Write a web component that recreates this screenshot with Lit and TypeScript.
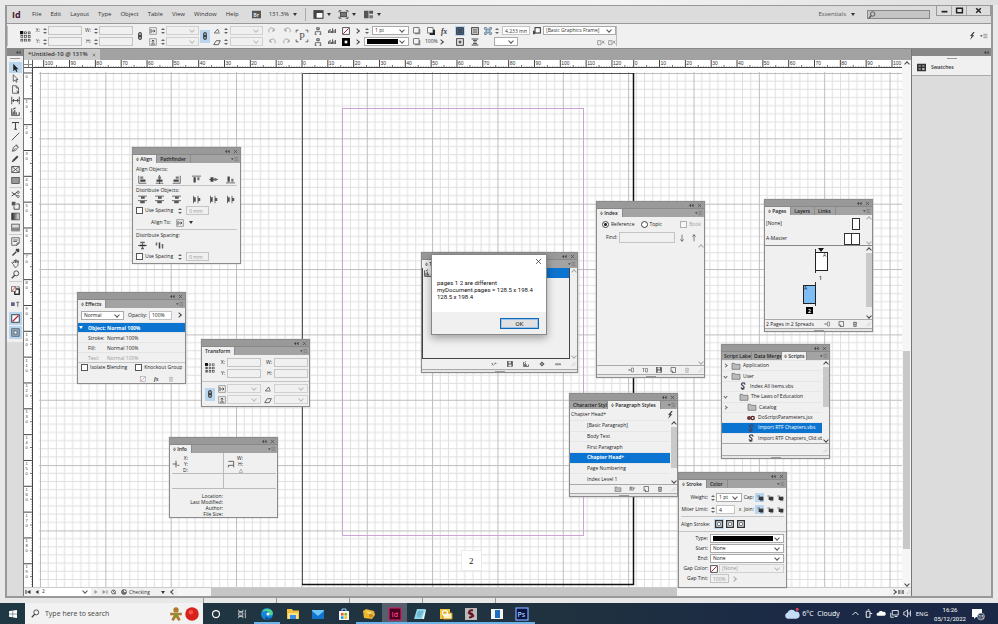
import { LitElement, html, svg, css, nothing } from "lit";
import { customElement } from "lit/decorators.js";
import { classMap } from "lit/directives/class-map.js";

/* Icon artwork, each drawn in a 12 x 12 box. */
const K = "#444";
const line = (d: string, w = 1, c = K) => svg`<path d=${d} fill="none" stroke=${c} stroke-width=${w} />`;
const fill = (d: string, c = K) => svg`<path d=${d} fill=${c} />`;

const art: Record<string, unknown> = {
  select: fill("M3 1v10l2.4-2.2L7 12l1.6-.8L7.200 8.200H10z", "#222"),
  direct: line("M3 1v9l2.300-2L7 11l1.200-.6-1.500-3H9.500z"),
  page: svg`${line("M2 1h5l3 3v7H2zM7 1v3h3")}${fill("M7 7l4 3-2 1z")}`,
  gap: line("M1 1v10M11 1v10M2 6h8M4 4L2 6l2 2M8 4l2 2-2 2", 1.2),
  collect: line("M1 2v9h10V7M3 10V6M5 10V4M7 10V7M3 3l3-2", 1.4),
  type: line("M2 3V2h8v1M6 2v9M4 11h4", 1.4),
  linetool: line("M1 11L11 1", 1.2),
  pen: svg`${line("M2 11l1-5 4-3 2 3-3 4zM2 11l4-4M7 2l3 4")}`,
  pencil: svg`${line("M3 9l6-6", 2.600)}${fill("M1 11l1-3 2 2z")}`,
  frame: line("M1 2h10v8H1zM1 2l10 8M11 2L1 10", 1.100),
  rect: svg`<rect x="1" y="2" width="10" height="8" fill="#999" stroke=${K} />`,
  scissors: svg`${line("M1 3l7 5M1 8l7-5", 1.300)}<circle cx="9.500" cy="3" r="1.500" fill="none" stroke=${K}/><circle cx="9.500" cy="8.500" r="1.500" fill="none" stroke=${K}/>`,
  transform: svg`<rect x="1" y="1" width="5" height="5" fill="#555"/>${line("M7 4h4v7H4V7", 1.200)}`,
  gradient: svg`<defs><linearGradient id="gr"><stop stop-color="#222"/><stop offset="1" stop-color="#eee"/></linearGradient></defs><rect x="1" y="1.500" width="10" height="9" fill="url(#gr)" stroke=${K}/>`,
  feather: svg`<rect x="1" y="1.500" width="10" height="9" fill="#ddd" stroke=${K}/>${fill("M1 6h10v4H1z", "#888")}`,
  note: line("M1 1h10v7l-3 3H1zM3 4h6M3 6h5M8 11V8h3"),
  dropper: svg`${line("M2 10l5-5", 1.800)}${fill("M6 3l1-2 4 0 0 4-2 1z")}`,
  hand: line("M3 7L1 5l1-1 2 1V2h1l1 3 0-4h1l1 4 1-3 1 .5L9 9l-2 2H5z"),
  zoom: svg`<circle cx="7" cy="4.500" r="3.300" fill="none" stroke=${K} stroke-width="1.200"/>${line("M5 7l-4 4", 1.600)}`,
  fillstroke: svg`<rect x="5" y="4" width="6" height="7" fill="#fff" stroke="#222" stroke-width="1.800"/><rect x=".5" y="1" width="6" height="6" fill="#fff" stroke="#555"/>${line("M1 7l5-6", 1, "#c22")}${line("M8 1h3v2", 0.800)}`,
  formats: svg`<rect x="0" y="3" width="5" height="5" fill="#668"/>${line("M7 3h4M9 3v6")}`,
  none: svg`<rect x="1" y="1" width="10" height="10" fill="#fff" stroke="#333" stroke-width="1.200"/>${line("M2 10l8-8", 1.500, "#b3173a")}`,
  preview: svg`<rect x="1" y="1" width="10" height="10" fill="#9ab" stroke="#456"/><rect x="4" y="4" width="4" height="4" fill="#fff" stroke="#456"/>`,
  blackbox: svg`<rect width="12" height="12" fill="#000"/><rect x="4" y="4" width="4" height="4" fill="#fff"/>`,
  ref: svg`${[1, 5, 9].map(y => [1, 5, 9].map(x => svg`<rect x=${x} y=${y} width="2" height="2" fill="#fff" stroke=${K} stroke-width=".8"/>`))}<rect x="0" y="0" width="3.500" height="3.500" fill="#111"/>`,
  chain: svg`<rect x="4" y="1" width="4" height="6" rx="2" fill="none" stroke=${K} stroke-width="1.800"/><rect x="4" y="5" width="4" height="6" rx="2" fill="none" stroke=${K} stroke-width="1.800"/>`,
  scaleX: svg`${line("M1 1h10v10H1z", 0.700)}${line("M3 3v6M4 6h5M7 4l2 2-2 2", 1.300)}`,
  scaleY: svg`${line("M1 1h10v10H1z", 0.700)}${line("M3 9h6M6 8V3M4 5l2-2 2 2", 1.300)}`,
  angle: line("M2 9h8M2 9l5-6 2 5", 1.100),
  shear: line("M1 10h7l3-6H5z", 1.200),
  rotR: line("M2 8a4 4 0 1 1 7-2M9 2v4H6", 1, "#888"),
  rotL: line("M10 8a4 4 0 1 0-7-2M3 2v4h3", 1, "#888"),
  flipP: svg`${line("M1 3V1h2M9 1h2v2M1 9v2h2M9 11h2V9", 0.700)}<text x="3.500" y="9.500" font-size="9" font-family="Liberation Serif, serif" fill="#555">P</text>`,
  tree: line("M6 1v4M4 1h4v3H4zM2 11V7h8v4M1 11h3M8 11h3", 1.100),
  bars: line("M1 9V5M3 9V3M5 9V6M7 9V2M9 9V5M11 9V3", 1.500),
  alignL: svg`${line("M1 1v10h10")}<rect x="3" y="2" width="4" height="3" fill="#777"/><rect x="3" y="6" width="7" height="3" fill="#444"/>`,
  alignC: svg`${line("M6 0v12M1 11h10")}<rect x="4" y="2" width="4" height="3" fill="#777"/><rect x="2" y="6" width="8" height="3" fill="#444"/>`,
  alignR: svg`${line("M11 1v10H1")}<rect x="5" y="2" width="4" height="3" fill="#777"/><rect x="2" y="6" width="7" height="3" fill="#444"/>`,
  alignT: svg`${line("M0 1.500h12")}<rect x="2" y="3" width="3" height="7" fill="#444"/><rect x="7" y="3" width="3" height="4" fill="#777"/>`,
  alignM: svg`${line("M0 6h12")}<rect x="2" y="3" width="4" height="6" fill="#444"/><rect x="7" y="4" width="3" height="4" fill="#777"/>`,
  alignB: svg`${line("M0 10.500h12")}<rect x="2" y="2" width="3" height="7" fill="#444"/><rect x="7" y="5" width="3" height="4" fill="#777"/>`,
  distH: svg`${line("M0 1.500h12M0 7.500h12")}<rect x="4" y="2" width="5" height="3" fill="#555"/><rect x="3" y="8" width="6" height="3" fill="#555"/>`,
  distV: svg`${line("M2 1v10M8 1v10")}<rect x="2" y="3" width="3" height="6" fill="#555"/><rect x="8" y="4" width="3" height="4" fill="#555"/>`,
  spaceV: svg`${line("M0 6h12M6 1v10")}<rect x="3" y="1" width="6" height="2" fill="#666"/><rect x="2" y="5" width="8" height="2" fill="#333"/><rect x="4" y="9" width="4" height="2" fill="#666"/>`,
  spaceH: svg`<rect x="1" y="2" width="2" height="4" fill="#666"/><rect x="5" y="2" width="2" height="8" fill="#444"/><rect x="9" y="4" width="2" height="6" fill="#666"/>`,
  drop: svg`<rect x="3" y="3" width="8" height="8" fill="#999"/><rect x="1" y="1" width="8" height="8" fill="#f4f4f4" stroke=${K}/>`,
  drop2: svg`<rect x="4" y="4" width="8" height="8" fill="#222"/><rect x="1" y="1" width="8" height="8" fill="#f4f4f4" stroke=${K}/>`,
  fx: svg`<text x="0" y="10" font-size="11" font-style="italic" font-weight="700" font-family="Liberation Serif, serif" fill="#333">fx</text>`,
  wrap: svg`<rect x="1" y="1" width="10" height="10" fill="#ddd" stroke="#333" stroke-width="1.400"/>${line("M3 4h6M3 6h6M3 8h6")}`,
  wrapDark: svg`<rect x="1" y="1" width="10" height="10" fill="#567" stroke="#234" stroke-width="1.400"/>${line("M3 4h6M3 6h6M3 8h6", 1, "#234")}`,
  wrapBox: svg`<rect x="1" y="1" width="10" height="10" fill="#eee" stroke="#333" stroke-width="1.400"/><rect x="4" y="4" width="4" height="4" fill="#555"/>`,
  jump: line("M1 1.500h10M1 10.500h10M3 4h6M3 8h6M5 6h2", 1.500),
  fit: svg`<rect x="3" y="3" width="6" height="6" fill="#acd" stroke="#357"/>${line("M1 4V1h3M8 1h3v3M1 8v3h3M8 11h3V8", 1.200, "#357")}`,
  style: svg`<rect x="3" y="1" width="8" height="8" fill="#fff" stroke="#333" stroke-width="1.600"/>${fill("M0 11V5l3 2v4z")}`,
  clear: line("M1 4h5v6H1zM7 8l4-4M8 4l3 5", 1, "#777"),
  bolt: fill("M8 0L3 6h2.500L3 12l6.500-7H6.800L10 0z"),
  menu: svg`${fill("M0 5h4L2 7.500z")}${line("M5 3.500h6M5 6h6M5 8.500h6", 1, "#777")}`,
  cc: svg`${fill("M5 2v8L0 6zM11 2v8L6 6z", "#444")}`,
  close: line("M2 2l8 8M10 2l-8 8", 1.500),
  bin: line("M2 3h8M5 2h2M3 3.500l.5 7.500h5l.5-7.500M5 5v4M7 5v4", 1.200),
  newpage: svg`${line("M2 1h9v10H4L2 9zM5 11V8H2", 1.300)}`,
  save: svg`<rect x="1" y="1" width="10" height="10" fill="#555" stroke="#333"/><rect x="3" y="1" width="5" height="4" fill="#ddd"/><rect x="3" y="7" width="6" height="4" fill="#eee"/>`,
  folder: svg`<path d="M0 2h4l1 1.500h7V11H0z" fill="#bbb" stroke="#666"/>`,
  disc: svg`<path d="M6 1l5 5-5 5-5-5z" fill="#555"/><circle cx="6" cy="6" r="1.500" fill="#eee"/>`,
  minus: line("M1 5.500h10v2H1z", 1.100),
  unlink: line("M1 9l3-3M5 9l4-6M8 5h3M1 5h3", 1.100),
  inpage: line("M0 6h5M3 4l2 2-2 2M7 2h4v8H7z", 1),
  uppage: line("M3 10V2M1 4l2-2 2 2M7 3h4v7H7z", 1),
  para: line("M2 9V2h2v7M6 9V2M8 4h3M8 9l3-6M5 2h2", 1.200),
  down: line("M6 1v10M3.500 8L6 11l2.500-3"),
  up: line("M6 11V1M3.500 4L6 1l2.500 3"),
  script: svg`${line("M8 2c-3-2-6 1-3 3s4 4 0 5M3 8l2 3 3-1M9 4L8 1", 1.900, "#445")}`,
  jsx: svg`<circle cx="3" cy="6" r="3" fill="#733"/><circle cx="8.500" cy="6" r="2.500" fill="none" stroke="#522" stroke-width="2"/>`,
  dot: line("M6 1v10M1 6h6M8 8h3", 1.200),
  bounds: line("M2 2h8v6H2v3M10 8v3", 1.200),
  capA: svg`<rect x="4" y="4" width="7" height="5" fill="#333"/>${line("M2 3h4M5 6h6M6 10h5", 1)}`,
  stA: svg`<rect x="1" y="1" width="10" height="10" fill="#fff" stroke="#333" stroke-width="2"/><rect x="4" y="4" width="4" height="4" fill="#fff" stroke="#345"/>`,
  book: svg`<rect x="0" y="1" width="12" height="10" fill="#555"/><text x="1.500" y="9" font-size="7" font-weight="700" font-family="Open Sans, sans-serif" fill="#ddd">Br</text>`,
  screen: svg`<rect x="0" y="1" width="12" height="10" fill="#fff" stroke="#333" stroke-width="1.400"/><rect x="0" y="1" width="12" height="3" fill="#444"/><rect x="0" y="1" width="3.500" height="10" fill="#444"/>`,
  screen2: svg`<rect x="2" y="3" width="8" height="6" fill="#777" stroke="#333"/>${line("M0 3V1h3M9 1h3v2M0 9v2h3M9 11h3V9", 1.200)}`,
  arrange: svg`<rect x="0" y="1" width="6" height="10" fill="#555"/><rect x="7" y="1" width="5" height="4" fill="#555"/><rect x="7" y="7" width="5" height="4" fill="#777"/>`,
  swatches: svg`<rect x="0" y="1" width="12" height="10" fill="#333"/><path d="M2 3h3v2H2zM7 3h3v2H7zM2 7h3v2H2z" fill="#999"/><path d="M7 7h3v2H7z" fill="#eee"/>`,
  globe: svg`<circle cx="6" cy="6" r="5" fill="#777" stroke="#333"/>${fill("M6 1v5h5z", "#eee")}`,
  view: svg`<circle cx="5" cy="6" r="4" fill="none" stroke="#444" stroke-width="1.500"/>${line("M5 3v3l5 4", 1.200)}`,
  split: svg`<rect x="0" y="2" width="5" height="8" fill="#888"/><rect x="7" y="2" width="5" height="8" fill="#888"/>`,
  grip: line("M11 2l-9 9M11 6l-5 5", 0.800, "#aaa"),
  first: svg`${fill("M11 2v8L4 6zM1 2h2v8H1z", "#333")}`,
  prev: fill("M9 2v8L3 6z", "#333"),
  next: fill("M3 2v8l6-4z", "#999"),
  last: fill("M1 2v8l7-4zM9 2h2v8H9z", "#999"),
  /* taskbar */
  win: svg`<path d="M0 1.700l5.500-.8v4.700H0zM6.200.8L12 0v5.600H6.200zM0 6.300h5.500V11L0 10.200zM6.200 6.300H12V12l-5.800-.8z" fill="#fff"/>`,
  ginger: svg`<circle cx="6" cy="2.500" r="2.300" fill="#b07a30"/><path d="M1 5h10v2H8l2 4-2 1-2-3-2 3-2-1 2-4H1z" fill="#b07a30"/><path d="M5 5v4M7 5v4" stroke="#6a3" stroke-width=".8"/>`,
  ball: svg`<circle cx="6" cy="6" r="5.800" fill="#d8201c"/><circle cx="5" cy="4.500" r="2" fill="#f4524a"/>`,
  cortana: svg`<circle cx="6" cy="6" r="4.200" fill="none" stroke="#fff" stroke-width="1.500"/>`,
  taskview: svg`<path d="M2 1v2h5V1M2 11V9h5v2M2 4.500h5v3H2zM10 1v3M10 6v5M9 5h2" fill="none" stroke="#ddd"/>`,
  edge: svg`<circle cx="6" cy="6" r="6" fill="#1686d9"/><path d="M1 4a6 6 0 0 1 11 1c0 3-4 3-4 1 1-3-4-4-7-2z" fill="#4fd08b"/><path d="M5 6c-1 4 3 5 6 3a6 6 0 0 1-7 2.500z" fill="#0c4f9e"/><circle cx="7" cy="6" r="1.500" fill="#e8f6ff"/>`,
  explorer: svg`<path d="M0 1h5l1 1.500h6V11H0z" fill="#f5c33b"/><path d="M1 5h10v6H1z" fill="#fbe08a"/><path d="M3 7h6v4H3z" fill="#3a8ee0"/>`,
  mail: svg`<path d="M0 3h12v8H0z" fill="#1173cc"/><path d="M0 3l6 5 6-5v-1H0z" fill="#6cc4f7"/>`,
  store: svg`<path d="M1 3h10v9H1z" fill="#f4f4f4"/><path d="M4 3V1h4v2" fill="none" stroke="#9cf"/><path d="M3 5h2.500v2.500H3z" fill="#f25022"/><path d="M6.500 5H9v2.500H6.500z" fill="#7fba00"/><path d="M3 8.300h2.500v2.500H3z" fill="#00a4ef"/><path d="M6.500 8.300H9v2.500H6.500z" fill="#ffb900"/>`,
  gold: svg`<path d="M0 3l3-2 8 2 1 4-3 4-8-1z" fill="#eab42d"/><path d="M2 3l6 1 3 3-5-1z" fill="#f8df7d"/><circle cx="8" cy="7.500" r="2" fill="#c88a1e"/>`,
  id: svg`<rect width="12" height="12" fill="#49021f" stroke="#c2246c" stroke-width="1.200"/><text x="2.500" y="8.500" font-size="7" font-family="Open Sans, sans-serif" font-weight="600" fill="#ff3f8e">Id</text>`,
  notepad: svg`<path d="M3 1h8l-2 10H0z" fill="#8fd3e8"/><path d="M8 11l3-10 1 1-2 9z" fill="#dff"/><path d="M4 4h5M3 6h5M3 8h4" stroke="#3a8ba8" stroke-width=".7"/>`,
  outlook: svg`<path d="M0 1h10v10H0z" fill="#f3c73c"/><path d="M3 5h9v6H3z" fill="#fff2b8" stroke="#c8961e"/><circle cx="5" cy="5" r="2.500" fill="none" stroke="#fff" stroke-width="1.200"/>`,
  estk: svg`<rect width="12" height="12" fill="#bbb"/><path d="M8 2.500c-4-1-5 2-2 3s2 4-2 4M3 4.500l6 4" fill="none" stroke="#6d1020" stroke-width="1.900"/>`,
  app: svg`<rect y="1" width="12" height="10" fill="#f4f4f4"/><rect x="4" y="2" width="5" height="8" fill="#1d6fc0"/>`,
  ps: svg`<rect width="12" height="12" fill="#06143f" stroke="#7fa8ff" stroke-width="1.200"/><text x="1.500" y="8.500" font-size="7" font-family="Open Sans, sans-serif" font-weight="600" fill="#a8c6ff">Ps</text>`,
  cloud: svg`<path d="M2 10a2.600 2.600 0 0 1 0-5 4 4 0 0 1 7-1 3 3 0 0 1 1 6z" fill="#c4dcf4"/><circle cx="10.500" cy="2" r="1.300" fill="#e0405a"/>`,
  chev: line("M2 8l4-4 4 4", 1.200, "#fff"),
  meet: line("M3 3h5v8H3zM5 1h2M8 6h3", 1.200, "#fff"),
  onedrive: fill("M1 9a2 2 0 0 1 1-4 3.500 3.500 0 0 1 6-1 2.600 2.600 0 0 1 2 5z", "#fff"),
  net: line("M3 2h8v6H3zM1 5v6h4M6 10h4", 1.100, "#fff"),
  sound: line("M1 4h2l3-3v10L3 8H1zM8 4v4M10 2v8", 1, "#fff"),
  notif: svg`<path d="M0 1h10v8H4l-2 2V9H0z" fill="#fff"/><circle cx="9" cy="8.500" r="3.500" fill="#33435c" stroke="#ddd" stroke-width=".6"/><text x="6.600" y="10.500" font-size="4.500" font-family="Open Sans, sans-serif" fill="#fff">15</text>`,
};

const icon = (name: string, cls = "") =>
  html`<svg class="ic ${cls}" viewBox="0 0 12 12" aria-hidden="true">${art[name]}</svg>`;
const btn = (name: string, label: string, cls = "") =>
  html`<button class="ib ${cls}" aria-label=${label}>${icon(name)}</button>`;
const field = (label: string, value = "", cls = "") =>
  html`<input class="field ${cls}" aria-label=${label} .value=${value} />`;
const sel = (label: string, value = "", cls = "") =>
  html`<span class="sel ${cls}"><select aria-label=${label}><option>${value}</option></select></span>`;
const spin = () => html`<span class="spin"><i></i><i></i></span>`;

const sheet = css`
  * { box-sizing: border-box; }
  button, input, select { font: inherit; color: inherit; margin: 0; padding: 0; border: 0; background: none; border-radius: 0; min-width: 0; }
  .ic { width: 8px; height: 8px; display: block; flex: none; overflow: visible; }
  .ib { display: grid; place-items: center; min-width: 10px; height: 10px; flex: none; }
  .ib.on { background: #b9d6ee; }
  .dim { opacity: 0.4; }
  .field { height: 9px; border: 1px solid #c4c4c4; background: #f0f0f0; padding: 0 2px; }
  .field.white { background: #fff; }
  .sel { position: relative; display: block; height: 9px; border: 1px solid #aaa; background: #fff; }
  .sel select { appearance: none; display: block; width: 100%; height: 7px; line-height: 7px; padding: 0 2px; }
  .sel::after { content: ""; position: absolute; right: 4px; top: 1px; width: 3px; height: 3px; border: solid #555; border-width: 0 1px 1px 0; transform: rotate(45deg); pointer-events: none; }
  .sel.off { background: #f0f0f0; border-color: #d0d0d0; color: #999; }
  .sel.off::after { border-color: #bbb; }
  .sel.bar::before { content: ""; position: absolute; left: 2px; right: 10px; top: 1px; bottom: 1px; background: #000; pointer-events: none; }
  .spin { display: grid; gap: 2px; justify-items: center; align-content: center; width: 5px; flex: none; }
  .spin i { width: 0; height: 0; border: solid transparent; border-width: 0 2px 2px; border-bottom-color: #666; }
  .spin i + i { border-width: 2px 2px 0; border-top-color: #666; }
`;

@customElement("float-panel")
export class FloatPanel extends LitElement {
  static properties = { tabs: { type: Array }, active: { type: Number }, foot: { type: Boolean } };
  tabs: string[] = [];
  active = 0;
  foot = false;
  static styles = [sheet, css`
    :host { display: flex; flex-direction: column; background: #f0f0f0; border: 1px solid #8c8c8c; color: #222; font: 5px/7px "Open Sans", sans-serif; box-shadow: 0 0 1px #999; }
    header { display: flex; justify-content: flex-end; align-items: center; gap: 3px; height: 7px; padding-right: 2px; background: #999; border-bottom: 1px solid #888; flex: none; }
    header .ic { width: 5px; height: 5px; }
    nav { display: flex; height: 8px; background: #a3a3a3; flex: none; overflow: hidden; }
    nav button { padding: 0 4px 0 3px; font-weight: 600; border-right: 1px solid #8c8c8c; white-space: nowrap; overflow: hidden; flex: none; max-width: 38px; text-align: left; }
    nav.three button { max-width: 30px; padding: 0 1px 0 2px; }
    nav button.on { background: #efefef; max-width: none; }
    nav .ic { margin-left: auto; margin-right: 1px; }
    .body { flex: 1; min-height: 0; display: flex; flex-direction: column; overflow: hidden; }
    footer { height: 3px; border-top: 1px solid #aaa; background: #e6e6e6; display: grid; justify-content: center; flex: none; }
    footer i { width: 10px; height: 1px; background: #999; margin-top: 1px; }
  `];
  render() {
    return html`
      <header>${icon("cc")}${icon("close")}</header>
      <nav class=${classMap({ three: this.tabs.length === 3 && this.active === 2 })}>
        ${this.tabs.map((t, i) => html`<button class=${classMap({ on: i === this.active })}>${t}</button>`)}
        ${icon("menu")}
      </nav>
      <div class="body"><slot></slot></div>
      ${this.foot ? html`<footer><i></i></footer>` : nothing}`;
  }
}

const MM = 2.583;
const range = (a: number, b: number) => Array.from({ length: b - a + 1 }, (_, i) => a + i);

@customElement("app-root")
export class AppRoot extends LitElement {
  static styles = [sheet, css`
    :host { position: relative; display: grid; grid-template-rows: 5px minmax(0, 1fr) 5px 21px; height: 100vh; overflow: hidden; background: #e9e9e9; color: #333; font: 5px/7px "Open Sans", sans-serif; }
    .behind { display: flex; align-items: stretch; background: linear-gradient(90deg, #e9e9e9, #f4f4f4 60%, #dedede); }
    .behind.low { background: #e8e8e8; padding-left: 203px; gap: 3px; }
    .behind.low i { width: 70px; border-left: 1px solid #999; }
    .window { margin: 0 5px; border: 2px solid #999; border-top-width: 1px; background: #dcdcdc; display: flex; flex-direction: column; min-height: 0; min-width: 0; }

    .menubar { display: flex; align-items: center; height: 18px; flex: none; padding-left: 5px; font-size: 6px; line-height: 9px; border-bottom: 1px solid #999; }
    .logo { font-size: 9px; font-weight: 700; color: #4a1830; width: 20px; }
    .menus { display: flex; gap: 9px; margin-right: 13px; }
    .quick { display: flex; align-items: center; gap: 8px; }
    .quick .ic { width: 9px; height: 9px; }
    .quick span { display: flex; align-items: center; gap: 4px; }
    .tri { width: 0; height: 0; border: solid transparent; border-width: 3px 2px 0; border-top-color: #333; }
    .rule { width: 1px; height: 13px; background: #aaa; }
    .right { margin-left: auto; display: flex; height: 100%; gap: 6px; }
    .workspace { display: flex; align-items: center; gap: 5px; margin-right: 6px; color: #555; }
    .find { display: flex; align-items: center; align-self: center; width: 63px; height: 9px; border: 1px solid #888; background: #c4c4c4; }
    .find input { width: 50px; height: 7px; }
    .winbtns { display: flex; height: 10px; border: 1px solid #999; border-top: 0; }
    .winbtns button { width: 15px; border-right: 1px solid #aaa; display: grid; place-items: center; }
    .winbtns button:last-child { width: 23px; border: 0; }
    .winbtns .ic { width: 7px; height: 7px; }

    .control { height: 25px; flex: none; background: #f0f0f0; display: grid; grid-auto-flow: column; grid-template-rows: 9px 9px; row-gap: 2px; align-content: center; align-items: center;
      grid-template-columns: 10px 16px 9px 6px 34px 11px 6px 34px 13px 14px 6px 33px 12px 12px 7px 33px 18px 12px 18px 14px 13px 15px 11px 45px 16px 12px 15px 16px 14px 12px 36px 13px 73px 1fr 10px 14px; border-bottom: 1px solid #888; }
    .control > * { justify-self: stretch; }
    .control > .ic, .control > .ib { justify-self: center; }
    .control > .field { width: 100%; }
    .tall { grid-row: span 2; }
    .control > .big { width: 14px; height: 14px; }
    .control > .ref { width: 11px; height: 11px; }
    .control > .ib.link { height: 13px; width: 10px; }
    .lab { text-align: right; padding-right: 2px; }
    .sep { border-left: 1px solid #bbb; height: 20px; }
    .pair { display: flex; align-items: center; gap: 3px; }
    .pair > .sel, .pair > .field { flex: 1; width: 0; }
    .half { width: 24px; }
    .end { justify-content: flex-end; }

    .body { flex: 1; display: grid; grid-template-columns: 17px minmax(0, 1fr) 79px; min-height: 0; }
    .tools { border-right: 1px solid #777; display: flex; flex-direction: column; }
    .cap { height: 7px; background: #888; flex: none; display: grid; justify-content: end; align-items: center; padding-right: 2px; }
    .cap .ic { width: 5px; height: 5px; }
    .set { background: #f0f0f0; display: flex; flex-direction: column; align-items: center; padding-bottom: 3px; }
    .set::before { content: ""; width: 10px; height: 1px; background: #999; margin: 2px 0 3px; }
    .set .ib { width: 13px; height: 11px; }
    .set .ic { width: 9px; height: 9px; }
    .set hr { width: 13px; height: 1px; margin: 1px 0; border: 0; background: #ccc; }
    .set .ib.wide { height: 13px; margin-top: 1px; }

    .doc { display: grid; grid-template-columns: 9px minmax(0, 1fr) 9px; grid-template-rows: 11px 8px minmax(0, 1fr) 9px; background: #fff; border-right: 1px solid #777; min-height: 0; }
    .tabs { grid-column: 1 / -1; background: #a2a2a2; display: flex; }
    .tabs button { background: #c9c9c9; padding: 0 4px; font-size: 6px; font-weight: 600; display: flex; align-items: center; gap: 4px; line-height: 11px; }
    .tabs .ic { width: 4px; height: 4px; }
    .corner { border-right: 1px solid #555; border-bottom: 1px solid #555; background: linear-gradient(#888, #888) 4px 0 / 1px 100% no-repeat, linear-gradient(#888, #888) 0 4px / 100% 1px no-repeat; }
    .art { width: 100%; height: 100%; display: block; min-height: 0; min-width: 0; overflow: hidden; font: 5px "Liberation Sans", sans-serif; }
    .art.v { font-size: 4px; }
    .vscroll { grid-column: 3; grid-row: 2 / 4; display: flex; flex-direction: column; align-items: center; background: #f6f6f6; }
    .vscroll .track { flex: 1; width: 7px; display: grid; grid-template-rows: 281fr 196fr 31fr; }
    .vscroll .track::before { content: ""; grid-row: 2; background: #c9c9c9; }
    .arrow { width: 7px; height: 7px; display: grid; place-items: center; }
    .arrow::before { content: ""; width: 3px; height: 3px; border: solid #444; border-width: 1px 0 0 1px; transform: rotate(45deg); }
    .arrow.d::before { transform: rotate(225deg); }
    .arrow.l::before { transform: rotate(-45deg); }
    .arrow.r::before { transform: rotate(135deg); }
    .status { grid-column: 1 / -1; display: flex; align-items: center; gap: 1px; background: #f0f0f0; border-top: 1px solid #ccc; }
    .status .ib { min-width: 8px; height: 8px; }
    .status .ic { width: 6px; height: 6px; }
    .status .pg { width: 51px; border: 0; height: 8px; margin-left: -2px; }
    .status .check { display: flex; align-items: center; gap: 2px; margin: 0 10px 0 2px; }
    .status .tri { margin-right: 3px; }
    .hbar { flex: 1; height: 8px; display: grid; grid-template-columns: 34fr 466fr 212fr; background: #f6f6f6; }
    .hbar::before { content: ""; grid-column: 2; background: #c6c6c6; }
    .dock .tile { background: #f0f0f0; border-bottom: 1px solid #aaa; display: flex; flex-direction: column; align-items: center; height: 20px; }
    .dock .tile::before { content: ""; width: 10px; height: 1px; background: #999; margin: 2px 0 4px; }
    .dock button { display: flex; align-items: center; gap: 5px; width: 100%; padding-left: 5px; font-weight: 600; }
    .dock button .ic { width: 9px; height: 9px; }

    /* Palettes float freely over the document. */
    float-panel, dialog { position: absolute; }
    .p-align { left: 132px; top: 147px; width: 109px; height: 117px; }
    .p-effects { left: 77px; top: 292px; width: 109px; height: 92px; }
    .p-transform { left: 201px; top: 339px; width: 109px; height: 68px; }
    .p-info { left: 169px; top: 437px; width: 109px; height: 81px; }
    .p-toc { left: 421px; top: 252px; width: 157px; height: 121px; }
    .p-index { left: 596px; top: 201px; width: 109px; height: 177px; }
    .p-pages { left: 764px; top: 199px; width: 109px; height: 133px; }
    .p-scripts { left: 721px; top: 344px; width: 109px; height: 115px; }
    .p-styles { left: 569px; top: 393px; width: 109px; height: 104px; }
    .p-stroke { left: 678px; top: 472px; width: 109px; height: 116px; }

    .pad { padding: 0 3px; }
    .row { display: flex; align-items: center; gap: 4px; height: 11px; flex: none; white-space: nowrap; }
    .icons { display: grid; grid-template-columns: 17px 17px 20px 17px 17px 10px; height: 11px; align-items: center; flex: none; padding-left: 1px; }
    .icons .ib { justify-self: start; }
    .icons .ic { width: 9px; height: 9px; }
    .p-align .pad { padding-top: 2px; }
    .p-align .cap2 { height: 9px; line-height: 8px; }
    .p-align .cap2.far { height: 11px; line-height: 11px; }
    .p-align .to { padding-left: 15px; height: 13px; }
    .div { border-top: 1px solid #c4c4c4; }
    label { display: flex; align-items: center; gap: 2px; white-space: nowrap; }
    input[type="checkbox"] { appearance: none; width: 7px; height: 7px; border: 1px solid #555; background: #fff; flex: none; }
    input[type="radio"] { appearance: none; width: 7px; height: 7px; border: 1px solid #444; border-radius: 50%; background: #fff; flex: none; }
    input[type="radio"]:checked { background: radial-gradient(circle, #222 0 1px, #fff 2px); }
    .w19 { width: 19px; } .w23 { width: 23px; } .w50 { width: 50px; }
    .grey { color: #999; }
    .p-effects .mode { height: 14px; }
    .p-effects .ticks { height: 10px; gap: 8px; }
    .p-effects .foot { padding-right: 10px; border: 0; }
    .lines > div { height: 10px; line-height: 10px; padding-left: 10px; display: flex; gap: 2px; border-top: 1px solid #e4e4e4; }
    .lines b { width: 17px; font-weight: 400; }
    .lines > .hot { background: #0b74d1; color: #fff; font-weight: 700; position: relative; }
    .lines > .hot .tri { position: absolute; left: 1px; top: 3px; border-top-color: #fff; }
    .foot { margin-top: auto; display: flex; align-items: center; justify-content: flex-end; gap: 6px; height: 9px; border-top: 1px solid #aaa; padding-right: 1px; flex: none; }
    .foot .ic { width: 6px; height: 6px; }
    .foot .ib { height: 8px; min-width: 8px; }
    .foot span { margin-right: auto; padding-left: 1px; }

    .tf { display: grid; grid-template-columns: 15px 10px 34px 13px 34px; grid-template-rows: 9px 9px; align-items: center; row-gap: 2px; flex: none; padding-top: 3px; }
    .tf.low { margin-top: 3px; padding-top: 2px; }
    .tf .sel, .tf .field { width: 34px; }
    .tf > .ic, .tf > .ib { justify-self: center; }
    .tf > .nine { width: 10px; height: 10px; }
    .tf > .link { height: 13px; }

    .info { display: grid; grid-template-columns: 51px 53px; margin: 0 2px; }
    .info > div { height: 21px; border-bottom: 1px solid #bbb; display: grid; grid-template-columns: 8px 8px; align-items: center; line-height: 6px; padding-top: 1px; text-align: right; }
    .info > div:nth-child(even) { border-left: 1px solid #bbb; padding-left: 3px; }
    .info > .low { height: 15px; }
    .meta { width: 53px; text-align: right; line-height: 6px; padding-top: 4px; }

    .list { flex: 1; min-height: 0; display: grid; grid-template-columns: minmax(0, 1fr) 7px; }
    .sbar { display: flex; flex-direction: column; align-items: center; }
    .sbar i { flex: 1; }
    .sbar i.t { width: 6px; background: #c9c9c9; }
    .sbar.faint { opacity: 0.4; }
    .well { border: 1px solid #444; border-top: 0; background: #f0f0f0; }
    .blue { display: flex; height: 10px; background: #0b74d1; }
    .blue span { width: 10px; background: #eee; display: grid; place-items: center; }
    .p-toc .foot { gap: 8px; height: 10px; border: 0; }

    .p-index .modes { height: 15px; gap: 6px; padding-left: 5px; }
    .p-index .modes label:last-child { margin-left: auto; }
    .p-index .seek { gap: 2px; padding-left: 9px; }
    .p-index .seek .field { width: 56px; height: 11px; }

    .masters { height: 31px; display: flex; border-bottom: 1px solid #888; flex: none; }
    .masters ul { flex: 1; margin: 0; padding: 1px 5px 0 1px; list-style: none; }
    .masters li { display: flex; justify-content: space-between; align-items: center; height: 15px; }
    .leaf { width: 8px; height: 12px; border: 1px solid #333; background: #fff; display: inline-block; }
    .leaf + .leaf { border-left: 0; }
    .leaves { display: flex; }
    .spreads { width: 100%; height: 72px; display: block; }

    .tree { overflow: hidden; display: grid; grid-auto-rows: 1fr; }
    .tree > div { display: flex; align-items: center; gap: 3px; min-height: 0; border-top: 1px solid #e6e6e6; white-space: nowrap; }
    .tree > .l1 { padding-left: 17px; } .tree > .l3 { padding-left: 25px; }
    .tree .tw { width: 3px; height: 3px; border: solid #666; border-width: 0 1px 1px 0; transform: rotate(-45deg); margin: 0 2px; }
    .tree .tw.o { transform: rotate(45deg); }
    .tree > .lt > .ic { margin-left: 8px; }
    .tree > .lt.in > .ic { margin-left: 16px; }
    .tree .hot { background: #0b74d1; color: #fff; }
    .p-scripts .foot { height: 12px; }
    .p-styles .current { justify-content: space-between; padding: 0 2px 0 1px; }
    .names { overflow: hidden; display: grid; grid-auto-rows: 1fr; }
    .names > div { display: flex; align-items: center; padding-left: 17px; border-top: 1px solid #e6e6e6; white-space: nowrap; }
    .names > .hot { background: #0b74d1; color: #fff; font-weight: 700; }

    .st { display: grid; grid-template-columns: 29px minmax(0, 1fr); column-gap: 2px; align-items: center; flex: none; row-gap: 1px; padding: 2px 2px 0 0; }
    .st.top { padding-top: 5px; row-gap: 3px; }
    .st > label { justify-content: flex-end; }
    .st > .sel { width: 100%; }
    .st .ib { min-width: 9px; height: 9px; }
    .st .pair { gap: 1px; }
    .st .pair > .field, .st .pair > .sel { flex: none; width: 26px; }
    .st .pair > .w19 { width: 19px; }
    .st .pair > .nn { flex: 1; }
    .cap3 { width: 13px; text-align: right; }
    .times { width: 6px; text-align: right; }
    .strokes { margin: 2px 2px 0; height: 15px; gap: 1px; }

    dialog { left: 431px; top: 254px; width: 116px; height: 81px; margin: 0; padding: 0; border: 1px solid #888; background: #fff; color: #111; display: flex; flex-direction: column; font: 6px/7px Roboto, sans-serif; box-shadow: 0 3px 8px rgba(0, 0, 0, 0.35); }
    dialog .x { align-self: flex-end; width: 16px; height: 13px; display: grid; place-items: center; }
    dialog .x .ic { width: 7px; height: 7px; }
    dialog p { margin: 11px 0 0; padding: 0 5px; white-space: pre; flex: 1; }
    dialog footer { height: 22px; background: #f0f0f0; display: flex; align-items: center; justify-content: flex-end; padding-right: 7px; }
    dialog .ok { width: 39px; height: 11px; border: 1px solid #0b68b8; background: #e1e1e1; line-height: 9px; box-shadow: inset 0 0 0 1px #9cc3e5; }

    .taskbar { display: flex; align-items: center; background: linear-gradient(90deg, #1f3843, #20323f 55%, #1b2946 80%, #1b2947); color: #fff; font-size: 6px; line-height: 8px; }
    .taskbar .start { width: 25px; height: 100%; display: grid; place-items: center; }
    .search { width: 178px; height: 100%; background: #f2f2f2; color: #444; display: flex; align-items: center; gap: 5px; padding: 0 4px 0 6px; font-size: 7px; }
    .search input { flex: 1; height: 12px; }
    .search input::placeholder { color: #444; opacity: 1; }
    .search .ic { width: 14px; height: 14px; margin-left: -3px; }
    .search .glass { width: 9px; height: 9px; margin: 0; }
    .apps { display: flex; height: 100%; }
    .apps button { width: 26px; height: 100%; display: grid; place-items: center; border-bottom: 2px solid transparent; padding-top: 2px; }
    .apps button:nth-child(even) { width: 25px; }
    .apps button.run { border-color: #6cb4e8; }
    .apps button.cur { background: #55606c; }
    .apps .ic { width: 12px; height: 12px; }
    .apps .plain .ic { width: 10px; height: 10px; }
    .tray { margin-left: auto; display: flex; align-items: center; height: 100%; gap: 4px; }
    .tray .ic { width: 9px; height: 9px; }
    .tray .wx { display: flex; align-items: center; gap: 3px; font-size: 7px; margin-right: 7px; }
    .tray .wx .ic { width: 14px; height: 14px; }
    .clock { font-family: Roboto, sans-serif; text-align: center; line-height: 9px; width: 36px; }
    .tray .note .ic { width: 12px; height: 12px; }
    .tray .note { width: 26px; display: grid; place-items: center start; }
  `];

  private hRuler() {
    const marks = (x0: number, a: number, b: number) => range(a, b).map(n => {
      const x = x0 + n * MM - 33;
      const len = n % 10 === 0 ? 8 : n % 5 === 0 ? 3 : 1.5;
      return svg`<path d="M${x} ${8 - len}V8" stroke="#444" stroke-width=${n % 10 ? 0.8 : 1}/>
        ${n % 10 === 0 ? svg`<text x=${x + 1} y="4.500" fill="#333">${Math.abs(n)}</text>` : nothing}`;
    });
    return html`<svg class="art">${marks(302, -103, 128)}${marks(633.700, 0, 104)}
      <path d="M0 7.500H869" stroke="#444"/></svg>`;
  }

  private vRuler() {
    return html`<svg class="art v">${range(-2, 199).map(n => {
      const y = 72 + n * MM - 67;
      const len = n % 10 === 0 ? 9 : n % 5 === 0 ? 3 : 1.5;
      return svg`<path d="M${9 - len} ${y}H9" stroke="#444" stroke-width=${n % 10 ? 0.8 : 1}/>
        ${n % 10 === 0 && n >= 0 ? String(n).split("").map((c, i) => svg`<text x="1.500" y=${y + 4.500 + i * 5} fill="#333">${c}</text>`) : nothing}`;
    })}<path d="M8.500 0V600" stroke="#444"/></svg>`;
  }

  private pasteboard() {
    return html`<svg class="art">
      <defs>
        <pattern id="grid" x="7" y="5" width="65.350" height="65.350" patternUnits="userSpaceOnUse">
          ${range(1, 7).map(i => svg`<path d="M${i * 8.169} 0V65.350M0 ${i * 8.169}H65.350" stroke="#dfdfdf" stroke-width="1"/>`)}
          <path d="M.5 0V65.350M0 .5H65.350" stroke="#bdbdbf" stroke-width="1"/>
        </pattern>
      </defs>
      <rect x="6" y="4" width="863" height="540" fill="url(#grid)"/>
      <path d="M269.500 516V5.500H600" fill="none" stroke="#555"/>
      <path d="M269 516.500H600.500V5" fill="none" stroke="#111" stroke-width="1.500"/>
      <rect x="309.500" y="40.500" width="241" height="427" fill="none" stroke="#cda3d6"/>
      <rect x="428.500" y="482.500" width="20" height="20" fill="#fff" stroke="#ddd" stroke-dasharray="1 1"/>
      <text x="436" y="496" font-size="9" font-family="Liberation Serif, serif" fill="#222">2</text>
    </svg>`;
  }

  private controlBar() {
    const arrow = html`<span class="arrow r"></span>`;
    return html`<div class="control">
      <span class="tall sep"></span>${icon("ref", "tall ref")}
      <span class="lab">X:</span><span class="lab">Y:</span>${spin()}${spin()}${field("X")}${field("Y")}
      <span class="lab">W:</span><span class="lab">H:</span>${spin()}${spin()}${field("W")}${field("H")}
      ${btn("chain", "Constrain size", "tall")}
      ${icon("scaleX")}${icon("scaleY")}${spin()}${spin()}${sel("Scale X", "", "off")}${sel("Scale Y", "", "off")}
      ${btn("chain", "Constrain scale", "tall on link")}
      ${icon("angle")}${icon("shear")}${spin()}${spin()}${sel("Rotation", "", "off")}${sel("Shear", "", "off")}
      ${btn("rotR", "Rotate right")}${btn("rotL", "Rotate left")}${btn("rotL", "Flip horizontal")}${btn("rotR", "Flip vertical")}
      ${icon("flipP", "tall big")}
      ${btn("tree", "Select container")}${btn("tree", "Select content")}${btn("bars", "Previous object")}${btn("bars", "Next object")}
      ${btn("none", "Fill")}${btn("blackbox", "Stroke")}${arrow}${arrow}
      <span class="pair">${spin()}${sel("Stroke weight", "1 pt")}</span>${sel("Stroke type", "", "bar")}
      ${btn("drop", "Corners")}${btn("drop", "Opacity")}
      ${btn("drop2", "Shadow")}<span>100%</span>${btn("fx", "Effects")}${arrow}
      ${btn("wrapDark", "No text wrap", "on")}${btn("wrapBox", "Wrap shape")}${btn("wrap", "Wrap bounding box")}${btn("jump", "Jump object")}
      ${icon("fit")}<span></span>
      <span class="pair">${spin()}${field("Corner radius", "4.233 mm", "white")}</span>${sel("Corner shape", "", "half")}
      ${icon("style")}<span></span>
      ${sel("Object style", "[Basic Graphics Frame]")}<span class="pair end">${icon("clear")}${icon("clear")}</span>
      <span class="tall sep"></span>${btn("bolt", "Quick apply", "tall")}${btn("menu", "Panel menu", "tall")}
    </div>`;
  }

  private toolbox() {
    const groups = [
      ["select", "direct", "page", "gap", "collect"],
      ["type", "linetool", "pen", "pencil", "frame", "rect"],
      ["scissors", "transform", "gradient", "feather"],
      ["note", "dropper", "hand", "zoom"],
    ];
    return html`<div class="tools"><div class="cap">${icon("cc")}</div><div class="set">
      ${groups.map(g => html`${g.map(t => btn(t, t, t === "select" ? "on" : ""))}<hr />`)}
      ${btn("fillstroke", "Fill and stroke", "wide")}${btn("formats", "Formatting affects", "wide")}
      ${btn("none", "Apply none", "on wide")}${btn("preview", "View mode", "on wide")}
    </div></div>`;
  }

  private sbar(cls = "", a = 0, t = 0, b = 1) {
    return html`<div class="sbar ${cls}"><span class="arrow"></span><i style="flex:${a}"></i><i class="t" style="flex:${t}"></i><i style="flex:${b}"></i><span class="arrow d"></span></div>`;
  }

  private panels() {
    return html`
    <float-panel class="p-align" .tabs=${["◊ Align", "Pathfinder"]}>
      <div class="pad">
        <div class="cap2">Align Objects:</div>
        <div class="icons">${["alignL", "alignC", "alignR", "alignT", "alignM", "alignB"].map(n => btn(n, n))}</div>
        <div class="cap2 div">Distribute Objects:</div>
        <div class="icons">${["distH", "distH", "distH", "distV", "distV", "distV"].map(n => btn(n, n))}</div>
        <div class="row"><label><input type="checkbox" />Use Spacing</label>${spin()}${field("Spacing", "0 mm", "w23 grey")}</div>
        <div class="row to">Align To: ${btn("scaleX", "Align to")}<i class="tri"></i></div>
        <div class="cap2 far div">Distribute Spacing:</div>
        <div class="icons">${btn("spaceV", "Vertical space")}${btn("spaceH", "Horizontal space")}</div>
        <div class="row"><label><input type="checkbox" />Use Spacing</label>${spin()}${field("Distribute spacing", "0 mm", "w23 grey")}</div>
      </div>
    </float-panel>

    <float-panel class="p-effects" .tabs=${["◊ Effects"]}>
      <div class="row pad mode">${sel("Blend mode", "Normal", "w50")}<label>Opacity: ${field("Opacity", "100%", "white w23")}</label><span class="arrow r"></span></div>
      <div class="lines">
        <div class="hot"><i class="tri"></i>Object: Normal 100%</div>
        <div><b>Stroke:</b>Normal 100%</div>
        <div><b>Fill:</b>Normal 100%</div>
        <div class="grey"><b>Text:</b>Normal 100%</div>
      </div>
      <div class="row pad div ticks"><label><input type="checkbox" />Isolate Blending</label><label><input type="checkbox" />Knockout Group</label></div>
      <div class="foot">${btn("none", "Clear effects", "dim")}${btn("fx", "Add effect")}${btn("bin", "Delete", "dim")}</div>
    </float-panel>

    <float-panel class="p-transform" .tabs=${["Transform"]}>
      <div class="tf">
        ${icon("ref", "nine tall")}<span class="lab">X:</span>${field("Transform X")}<span class="lab">W:</span>${field("Transform W")}
        <span class="lab">Y:</span>${field("Transform Y")}<span class="lab">H:</span>${field("Transform H")}
      </div>
      <div class="tf low div">
        ${btn("chain", "Constrain", "on link tall")}${icon("scaleX")}${sel("Scale width", "", "off")}${icon("angle")}${sel("Rotate", "", "off")}
        ${icon("scaleY")}${sel("Scale height", "", "off")}${icon("shear")}${sel("Shear angle", "", "off")}
      </div>
    </float-panel>

    <float-panel class="p-info" .tabs=${["◊ Info"]}>
      <div class="info">
        <div>${icon("dot")}<span>X:<br />Y:<br />D:</span></div>
        <div>${icon("bounds")}<span>W:<br />H:<br />△</span></div>
        <div class="low"></div><div class="low"></div>
      </div>
      <div class="meta">Location:<br />Last Modified:<br />Author:<br />File Size:</div>
    </float-panel>

    <float-panel class="p-toc" foot .tabs=${["◊ Text"]}>
      <div class="list">
        <div class="well"><div class="blue"><span>${icon("collect")}</span></div></div>
        ${this.sbar("faint")}
      </div>
      <div class="foot">${btn("unlink", "Unlink")}${btn("save", "Save")}${btn("collect", "Go to source")}${btn("disc", "Go to target")}${btn("minus", "Options")}${icon("grip")}</div>
    </float-panel>

    <float-panel class="p-index" foot .tabs=${["◊ Index"]}>
      <div class="row pad modes">
        <label><input type="radio" name="mode" checked />Reference</label>
        <label><input type="radio" name="mode" />Topic</label>
        <label class="dim"><input type="checkbox" />Book</label>
      </div>
      <div class="row seek"><label>Find: <input class="field" /></label>${btn("down", "Next")}${btn("up", "Previous")}</div>
      <div class="list"><div></div>${this.sbar("faint")}</div>
      <div class="foot">${btn("inpage", "Go to")}${btn("uppage", "Update")}${btn("save", "Generate")}${btn("newpage", "New entry")}${btn("bin", "Delete entry", "dim")}${icon("grip")}</div>
    </float-panel>

    <float-panel class="p-pages" foot .tabs=${["◊ Pages", "Layers", "Links"]}>
      <div class="masters">
        <ul><li>[None]<span class="leaf"></span></li><li>A-Master<span class="leaves"><span class="leaf"></span><span class="leaf"></span></span></li></ul>
        ${this.sbar("faint")}
      </div>
      <div class="list">
        <svg class="spreads" viewBox="0 0 100 72" preserveAspectRatio="xMidYMin meet">
          <path d="M50.500 3v24M50.500 36v24" stroke="#333"/><path d="M53 2h6l-3 4z" fill="#111"/>
          <rect x="50.500" y="6.500" width="12" height="18" fill="#fff" stroke="#222"/>
          <rect x="38.500" y="39.500" width="12" height="18" fill="#7fbdf5" stroke="#222"/>
          <rect x="41" y="61" width="7" height="7" fill="#000"/>
          <g font-family="Open Sans, sans-serif" font-size="5" fill="#222"><text x="58" y="11">A</text><text x="39" y="44">A</text><text x="54" y="34" font-weight="600">1</text><text x="43" y="66.500" fill="#fff" font-weight="700">2</text></g>
        </svg>
        ${this.sbar("", 0, 50, 5)}
      </div>
      <div class="foot"><span>2 Pages in 2 Spreads</span>${btn("inpage", "Edit page size")}${btn("newpage", "New page")}${btn("bin", "Delete page")}${icon("grip")}</div>
    </float-panel>

    <float-panel class="p-scripts" foot .active=${2} .tabs=${["Script Label", "Data Merge", "◊ Scripts"]}>
      <div class="list">
        <div class="tree">
          <div><i class="tw"></i>${icon("folder")}Application</div>
          <div><i class="tw o"></i>${icon("folder")}User</div>
          <div class="l1">${icon("script")}Index All Items.vbs</div>
          <div class="lt"><i class="tw o"></i>${icon("folder")}The Laws of Education</div>
          <div class="lt in"><i class="tw"></i>${icon("folder")}Catalog</div>
          <div class="l3">${icon("jsx")}DoScriptParameters.jsx</div>
          <div class="l3 hot">${icon("script")}Import RTF Chapters.vbs</div>
          <div class="l3">${icon("script")}Import RTF Chapters_Old.vbs</div>
        </div>
        ${this.sbar("", 0, 37, 27)}
      </div>
      <div class="foot">${icon("grip")}</div>
    </float-panel>

    <float-panel class="p-styles" foot .active=${1} .tabs=${["Character Styles", "◊ Paragraph Styles"]}>
      <div class="row current">Chapter Head+${btn("bolt", "Clear overrides")}</div>
      <div class="list">
        <div class="names">
          ${["[Basic Paragraph]", "Body Text", "First Paragraph", "Chapter Head+", "Page Numbering", "Index Level 1"].map(n => html`<div class=${classMap({ hot: n === "Chapter Head+" })}>${n}</div>`)}
        </div>
        ${this.sbar("", 0, 38, 8)}
      </div>
      <div class="foot">${btn("folder", "New group")}${btn("para", "Clear")}${btn("newpage", "New style")}${btn("bin", "Delete style")}${icon("grip")}</div>
    </float-panel>

    <float-panel class="p-stroke" .tabs=${["◊ Stroke", "Color"]}>
      <div class="st top">
        <label>Weight:</label><span class="pair">${spin()}${sel("Weight", "1 pt")}<span class="cap3">Cap:</span>${btn("capA", "Butt cap", "on")}${btn("capA", "Round cap")}${btn("capA", "Square cap")}</span>
        <label>Miter Limit:</label><span class="pair">${spin()}${field("Miter limit", "4", "white w19")}<span class="times">x</span><span class="cap3">Join:</span>${btn("capA", "Miter join", "on")}${btn("capA", "Round join")}${btn("capA", "Bevel join")}</span>
      </div>
      <div class="row div strokes">Align Stroke: &nbsp;${btn("stA", "Center", "on")}${btn("stA", "Inside")}${btn("stA", "Outside")}</div>
      <div class="st div">
        <label>Type:</label>${sel("Type", "", "bar")}
        <label>Start:</label>${sel("Start", "None")}
        <label>End:</label>${sel("End", "None")}
        <label>Gap Color:</label><span class="pair">${icon("none")}${sel("Gap color", "[None]", "off nn")}</span>
        <label>Gap Tint:</label><span class="pair">${field("Gap tint", "100%", "grey w19")}<span class="arrow r dim"></span></span>
      </div>
    </float-panel>

    <dialog open aria-label="Alert">
      <button class="x" aria-label="Close">${icon("close")}</button>
      <p>pages 1 2 are different
myDocument.pages = 128.5 x 198.4
128.5 x 198.4</p>
      <footer><button class="ok">OK</button></footer>
    </dialog>`;
  }

  private taskbar() {
    const apps: [string, string][] = [
      ["cortana", "plain"], ["taskview", "plain"], ["edge", "run"], ["explorer", ""], ["mail", ""], ["store", ""],
      ["gold", "run"], ["id", "run cur"], ["notepad", "run"], ["outlook", "run"], ["estk", "run"], ["app", "run"], ["ps", "run"],
    ];
    return html`<div class="taskbar">
      <button class="start" aria-label="Start">${icon("win")}</button>
      <div class="search">${icon("zoom", "glass")}<input aria-label="Search" placeholder="Type here to search" />${icon("ginger")}${icon("ball")}</div>
      <div class="apps">${apps.map(([n, c]) => html`<button class=${c} aria-label=${n}>${icon(n)}</button>`)}</div>
      <div class="tray">
        <span class="wx">${icon("cloud")}6°C&nbsp; Cloudy</span>
        ${["chev", "meet", "onedrive", "net", "sound"].map(n => icon(n))}<span>ENG</span>
        <span class="clock">16:26<br />05/12/2022</span>
        <button class="note" aria-label="Notifications">${icon("notif")}</button>
      </div>
    </div>`;
  }

  render() {
    return html`
      <div class="behind"></div>
      <div class="window">
        <div class="menubar">
          <span class="logo">Id</span>
          <div class="menus">${["File", "Edit", "Layout", "Type", "Object", "Table", "View", "Window", "Help"].map(m => html`<button>${m}</button>`)}</div>
          <div class="quick">
            ${icon("book")}<span>131.3%<i class="tri"></i></span><i class="rule"></i>
            ${["screen", "screen2", "arrange"].map(n => html`<span>${icon(n)}<i class="tri"></i></span>`)}
          </div>
          <div class="right">
            <button class="workspace">Essentials<i class="tri"></i></button>
            <div class="find">${icon("zoom")}<input aria-label="Search help" /></div>
            <div class="winbtns">
              <button aria-label="Minimise"><svg class="ic" viewBox="0 0 12 12"><path d="M1 8h10" stroke="#222" stroke-width="3"/></svg></button>
              <button aria-label="Maximise"><svg class="ic" viewBox="0 0 12 12"><path d="M1 2h10v8H1z" fill="none" stroke="#222" stroke-width="2.500"/></svg></button>
              <button aria-label="Close"><svg class="ic" viewBox="0 0 12 12"><path d="M2 2l8 8M10 2l-8 8" stroke="#222" stroke-width="2.500"/></svg></button>
            </div>
          </div>
        </div>
        ${this.controlBar()}
        <div class="body">
          ${this.toolbox()}
          <div class="doc">
            <div class="tabs"><button>*Untitled-10 @ 131% ${icon("close")}</button></div>
            <div class="corner"></div>${this.hRuler()}
            <div class="vscroll"><span class="arrow"></span><div class="track"></div><span class="arrow d"></span></div>
            ${this.vRuler()}${this.pasteboard()}
            <div class="status">
              ${btn("first", "First page")}${btn("prev", "Previous page")}${sel("Page", "2", "pg")}
              ${btn("next", "Next page")}${btn("last", "Last page")}${btn("view", "Open")}
              <span class="check">${icon("globe")}Checking</span><i class="tri"></i>
              <span class="arrow l"></span><div class="hbar"></div><span class="arrow r"></span>${icon("split")}${icon("grip")}
            </div>
          </div>
          <div class="dock">
            <div class="cap">${icon("cc")}</div>
            <div class="tile"><button>${icon("swatches")}Swatches</button></div>
          </div>
        </div>
      </div>
      <div class="behind low"><i></i><i></i><i></i><i></i><i></i></div>
      ${this.taskbar()}
      ${this.panels()}`;
  }
}
